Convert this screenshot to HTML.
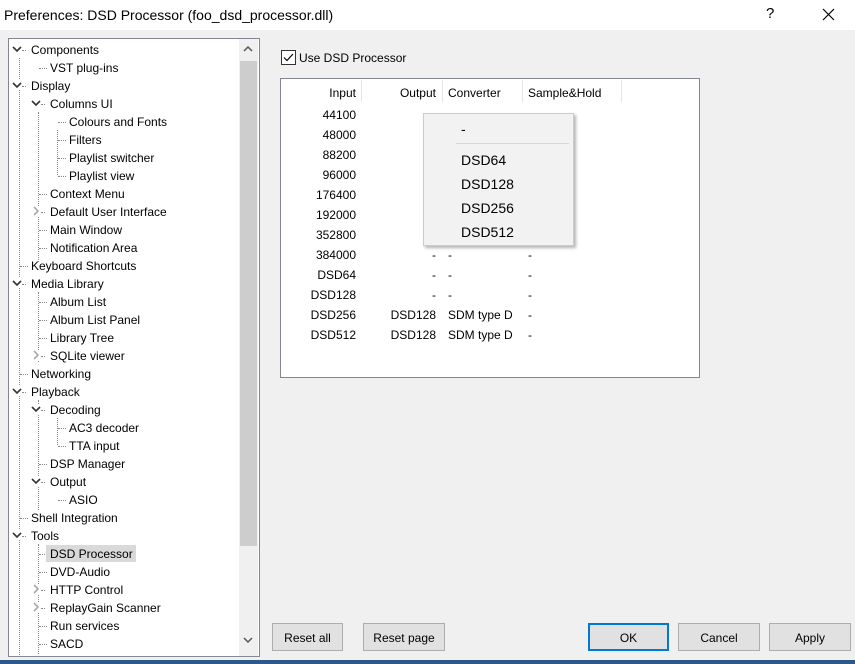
<!DOCTYPE html><html><head><style>
body{margin:0;width:855px;height:664px;background:#f0f0f0;font:12px "Liberation Sans",sans-serif;color:#000;position:relative;overflow:hidden}
.a{position:absolute;white-space:nowrap}
.t{position:absolute;height:18px;line-height:18px;white-space:nowrap}
.btn{position:absolute;top:623px;height:28px;border:1px solid #adadad;background:#e1e1e1;text-align:center;line-height:28px;box-sizing:border-box}
.dv{position:absolute;border-left:1px dotted #888}
.dh{position:absolute;border-top:1px dotted #888;width:8px}
.ic{position:absolute;background:#fff}
.r{position:absolute;text-align:right;width:70px}
</style></head><body>
<div class="a" style="left:0;top:0;width:855px;height:30px;background:#fff"></div>
<div class="a" style="left:4px;top:7px;font-size:14px">Preferences: DSD Processor (foo_dsd_processor.dll)</div>
<div class="a" style="left:766px;top:5px;font-size:15px">?</div>
<svg class="a" style="left:822px;top:8px" width="13" height="13"><path d="M1 1L12 12M12 1L1 12" stroke="#000" stroke-width="1.2"/></svg>

<div class="a" style="left:8px;top:38px;width:250px;height:617px;background:#fff;border:1px solid #828790"></div>
<div class="a" style="left:239px;top:39px;width:19px;height:617px;background:#f0f0f0"></div>
<div class="a" style="left:240px;top:61px;width:17px;height:485px;background:#cdcdcd"></div>
<svg class="a" style="left:243px;top:45px" width="10" height="8"><path d="M1 6L5 2L9 6" stroke="#555" fill="none" stroke-width="1.5"/></svg>
<svg class="a" style="left:243px;top:636px" width="10" height="8"><path d="M1 2L5 6L9 2" stroke="#555" fill="none" stroke-width="1.5"/></svg>

<div class="dv" style="left:19px;top:58px;height:597px"></div>
<div class="dv" style="left:38px;top:112px;height:150px"></div>
<div class="dv" style="left:38px;top:292px;height:70px"></div>
<div class="dv" style="left:38px;top:400px;height:110px"></div>
<div class="dv" style="left:38px;top:544px;height:110px"></div>
<div class="dv" style="left:57px;top:418px;height:27px"></div>
<div class="dv" style="left:57px;top:130px;height:45px"></div>

<div id="tree"></div>
<div class="a" style="left:46px;top:545px;width:90px;height:17px;background:#d9d9d9"></div>
<script>
var items=[[0,'Components',1],[1,'VST plug-ins',0],[0,'Display',1],[1,'Columns UI',1],[2,'Colours and Fonts',0],[2,'Filters',0],[2,'Playlist switcher',0],[2,'Playlist view',0],[1,'Context Menu',0],[1,'Default User Interface',2],[1,'Main Window',0],[1,'Notification Area',0],[0,'Keyboard Shortcuts',0],[0,'Media Library',1],[1,'Album List',0],[1,'Album List Panel',0],[1,'Library Tree',0],[1,'SQLite viewer',2],[0,'Networking',0],[0,'Playback',1],[1,'Decoding',1],[2,'AC3 decoder',0],[2,'TTA input',0],[1,'DSP Manager',0],[1,'Output',1],[2,'ASIO',0],[0,'Shell Integration',0],[0,'Tools',1],[1,'DSD Processor',0],[1,'DVD-Audio',0],[1,'HTTP Control',2],[1,'ReplayGain Scanner',2],[1,'Run services',0],[1,'SACD',0]];
var h='';items.forEach(function(it,i){var y=40+i*18;var x=31+it[0]*19;var ex=x-12;
if(it[2]){h+='<div class="dh" style="left:'+(ex+3)+'px;top:'+(y+10)+'px;width:4px"></div>';
h+='<svg class="ic" style="left:'+(ex-7)+'px;top:'+(y+4)+'px;z-index:1" width="10" height="10">'+(it[2]==1?'<path d="M1 3L5 7L9 3" stroke="#333" fill="none" stroke-width="1.6"/>':'<path d="M3 1L7 5L3 9" stroke="#aaa" fill="none" stroke-width="1.6"/>')+'</svg>';}
else h+='<div class="dh" style="left:'+(ex+1)+'px;top:'+(y+10)+'px"></div>';
h+='<div class="t" style="left:'+x+'px;top:'+(y+1)+'px;z-index:2">'+it[1]+'</div>';});
document.getElementById('tree').innerHTML=h;
</script>

<div class="a" style="left:281px;top:50px;width:13px;height:13px;border:1px solid #333;background:#fff"></div>
<svg class="a" style="left:283px;top:52px" width="11" height="11"><path d="M1 5.5L4 8.5L10 2" stroke="#000" fill="none" stroke-width="1.2"/></svg>
<div class="a" style="left:299px;top:51px">Use DSD Processor</div>

<div class="a" style="left:280px;top:78px;width:418px;height:298px;background:#fff;border:1px solid #828790"></div>
<div class="a" style="left:361px;top:80px;height:22px;border-left:1px solid #e5e5e5"></div>
<div class="a" style="left:442px;top:80px;height:22px;border-left:1px solid #e5e5e5"></div>
<div class="a" style="left:522px;top:80px;height:22px;border-left:1px solid #e5e5e5"></div>
<div class="a" style="left:621px;top:80px;height:22px;border-left:1px solid #e5e5e5"></div>
<div class="r" style="left:286px;top:86px">Input</div>
<div class="r" style="left:366px;top:86px">Output</div>
<div class="a" style="left:448px;top:86px">Converter</div>
<div class="a" style="left:528px;top:86px">Sample&amp;Hold</div>
<div id="rows"></div>
<script>
var rr=[['44100'],['48000'],['88200'],['96000'],['176400'],['192000'],['352800'],['384000','-','-','-'],['DSD64','-','-','-'],['DSD128','-','-','-'],['DSD256','DSD128','SDM type D','-'],['DSD512','DSD128','SDM type D','-']];
var h2='';rr.forEach(function(r,i){var y=108+i*20;h2+='<div class="r" style="left:286px;top:'+y+'px">'+r[0]+'</div>';
if(r[1]){h2+='<div class="r" style="left:366px;top:'+y+'px">'+r[1]+'</div><div class="a" style="left:448px;top:'+y+'px">'+r[2]+'</div><div class="a" style="left:528px;top:'+y+'px">'+r[3]+'</div>';}});
document.getElementById('rows').innerHTML=h2;
</script>

<div class="a" style="left:423px;top:113px;width:149px;height:131px;background:#f2f2f2;border:1px solid #ccc;box-shadow:2px 2px 3px rgba(0,0,0,.3);font-size:14px">
<div class="a" style="left:37px;top:7px">-</div>
<div class="a" style="left:32px;top:29px;width:113px;border-top:1px solid #d7d7d7"></div>
<div class="a" style="left:37px;top:38px">DSD64</div>
<div class="a" style="left:37px;top:62px">DSD128</div>
<div class="a" style="left:37px;top:86px">DSD256</div>
<div class="a" style="left:37px;top:110px">DSD512</div>
</div>

<div class="btn" style="left:272px;width:71px">Reset all</div>
<div class="btn" style="left:363px;width:82px">Reset page</div>
<div class="btn" style="left:588px;width:81px;border:2px solid #0078d7;line-height:26px">OK</div>
<div class="btn" style="left:678px;width:82px">Cancel</div>
<div class="btn" style="left:769px;width:82px">Apply</div>
<div class="a" style="left:0;top:660px;width:855px;height:4px;background:#2b5a8a"></div>
</body></html>
